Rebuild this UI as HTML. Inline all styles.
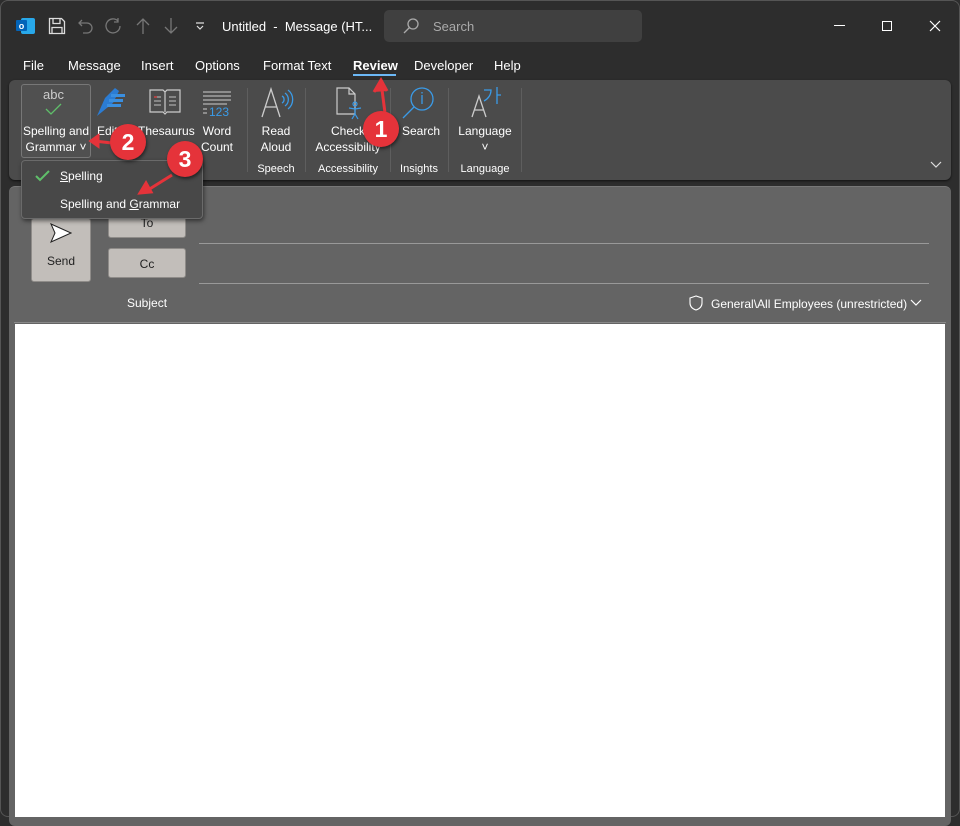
<!DOCTYPE html>
<html><head><style>
*{margin:0;padding:0;box-sizing:border-box}
body{width:960px;height:817px;background:#2d2d2d;font-family:"Liberation Sans",sans-serif;color:#fff;position:relative;overflow:hidden;font-size:12px}
.a{position:absolute;white-space:nowrap}
.t{font-size:12px;color:#fff;text-align:center;line-height:16px}
.sep{position:absolute;width:1px;background:#5e5e5e;top:88px;height:84px}
.gl{position:absolute;top:163px;font-size:11px;color:#fff;text-align:center}
.btn{position:absolute;background:#c2beba;border:1px solid #8f8c89;border-radius:3px;color:#222;font-size:12px;text-align:center}
.badge{position:absolute;width:36px;height:36px;border-radius:50%;background:#e5333a;color:#fff;font-weight:bold;font-size:23px;text-align:center;line-height:36px;box-shadow:1px 2px 3px rgba(0,0,0,.5)}
</style></head><body>
<div class="a" style="left:0;top:0;width:960px;height:817px;border:1px solid #555;border-radius:8px;pointer-events:none"></div>
<svg class="a" style="left:16px;top:17px" width="20" height="18"><rect x="5" y="1" width="14" height="16" rx="2" fill="#28a8ea"/><rect x="0" y="3" width="11" height="11" rx="1" fill="#0364b8"/><text x="5.5" y="12" font-size="9" fill="#fff" text-anchor="middle" font-family="Liberation Sans" font-weight="bold">o</text></svg>
<svg class="a" style="left:48px;top:17px" width="18" height="18" fill="none" stroke="#ddd" stroke-width="1.3"><path d="M1.5 1.5h12l3 3v12h-15z M5 1.5v5h7v-5 M4 16.5v-6h10v6"/></svg>
<svg class="a" style="left:77px;top:17px" width="18" height="18" fill="none" stroke="#777" stroke-width="1.3"><path d="M5 3 2 6l3 3 M2 6h8a5 5 0 0 1 0 10H6"/></svg>
<svg class="a" style="left:104px;top:17px" width="18" height="18" fill="none" stroke="#777" stroke-width="1.3"><path d="M14 4a7 7 0 1 0 2 5 M14 1v4h-4"/></svg>
<svg class="a" style="left:135px;top:17px" width="16" height="18" fill="none" stroke="#777" stroke-width="1.3"><path d="M8 17V2 M2 8l6-6 6 6"/></svg>
<svg class="a" style="left:163px;top:17px" width="16" height="18" fill="none" stroke="#777" stroke-width="1.3"><path d="M8 1v15 M2 10l6 6 6-6"/></svg>
<svg class="a" style="left:194px;top:20px" width="12" height="12" fill="none" stroke="#ddd" stroke-width="1.2"><path d="M2 3h8 M3 6l3 3 3-3"/></svg>
<div class="a" style="left:222px;top:19px;font-size:13px">Untitled&nbsp; - &nbsp;Message (HT...</div>
<div class="a" style="left:384px;top:10px;width:258px;height:32px;background:#404040;border-radius:5px"></div>
<svg class="a" style="left:402px;top:17px" width="18" height="18" fill="none" stroke="#aaa" stroke-width="1.3"><circle cx="11" cy="7" r="5"/><path d="M7.5 10.5 2 16"/></svg>
<div class="a" style="left:433px;top:19px;font-size:13px;color:#aaa">Search</div>
<div class="a" style="left:834px;top:25px;width:11px;height:1px;background:#fff"></div>
<div class="a" style="left:882px;top:21px;width:10px;height:10px;border:1px solid #fff"></div>
<svg class="a" style="left:929px;top:20px" width="12" height="12" stroke="#fff" stroke-width="1.2"><path d="M1 1l10 10M11 1 1 11"/></svg>
<div class="a" style="top:58px;font-size:13px;left:23px">File</div>
<div class="a" style="top:58px;font-size:13px;left:68px">Message</div>
<div class="a" style="top:58px;font-size:13px;left:141px">Insert</div>
<div class="a" style="top:58px;font-size:13px;left:195px">Options</div>
<div class="a" style="top:58px;font-size:13px;left:263px">Format Text</div>
<div class="a" style="top:58px;font-size:13px;left:353px;font-weight:bold">Review</div>
<div class="a" style="left:353px;top:74px;width:43px;height:2px;background:#6cb8f6"></div>
<div class="a" style="top:58px;font-size:13px;left:414px">Developer</div>
<div class="a" style="top:58px;font-size:13px;left:494px">Help</div>
<div class="a" style="left:9px;top:80px;width:942px;height:100px;background:#4b4b4b;border-radius:6px;box-shadow:0 1px 2px #111"></div>
<div class="a" style="left:21px;top:84px;width:70px;height:74px;border:1px solid #777;border-radius:3px;background:#505050"></div>
<div class="a" style="left:43px;top:87px;font-size:13px;color:#ccc">abc</div>
<svg class="a" style="left:44px;top:103px" width="24" height="14" fill="none" stroke="#5fbf6a" stroke-width="1.3"><path d="M2 6l5 5 10-10"/></svg>
<div class="a t" style="left:21px;top:123px;width:70px">Spelling and<br>Grammar ˅</div>
<svg class="a" style="left:95px;top:86px" width="34" height="32"><path d="M2 30 10 12 20 2l4 3-6 12z" fill="#2b7cd3"/><rect x="16" y="8" width="14" height="3" fill="#3a8fe0"/><rect x="14" y="13" width="14" height="3" fill="#3a8fe0"/><rect x="12" y="18" width="14" height="3" fill="#3a8fe0"/></svg>
<div class="a t" style="left:97px;top:123px">Edit</div>
<svg class="a" style="left:148px;top:88px" width="34" height="28" fill="none" stroke="#ccc" stroke-width="1.2"><path d="M2 2h13l2 2 2-2h13v22H19l-2 2-2-2H2z M17 4v20"/><path d="M6 9h7M6 13h7M6 17h7M21 9h7M21 13h7M21 17h7" stroke="#aaa"/><path d="M6 9h3" stroke="#d33"/></svg>
<div class="a t" style="left:138px;top:123px">Thesaurus</div>
<svg class="a" style="left:202px;top:90px" width="32" height="28"><path d="M1 2h28M1 6h28M1 10h28M1 14h24" stroke="#ccc" stroke-width="1"/><path d="M1 19h4M1 23h4" stroke="#ccc"/><text x="7" y="26" font-size="12" fill="#3a9be8" font-family="Liberation Sans">123</text></svg>
<div class="a t" style="left:196px;top:123px;width:42px">Word<br>Count</div>
<div class="sep" style="left:247px"></div>
<svg class="a" style="left:260px;top:86px" width="34" height="32" fill="none" stroke="#ccc" stroke-width="1.3"><path d="M2 31 11 3l9 28 M5 21h12"/><path d="M22 10a4 4 0 0 1 0 7 M25 7a8 8 0 0 1 0 13 M28 4a12 12 0 0 1 0 19" stroke="#3a9be8"/></svg>
<div class="a t" style="left:255px;top:123px;width:42px">Read<br>Aloud</div>
<div class="gl" style="left:255px;width:42px">Speech</div>
<div class="sep" style="left:305px"></div>
<svg class="a" style="left:335px;top:87px" width="34" height="34" fill="none" stroke="#ccc" stroke-width="1.2"><path d="M2 1h12l6 6v20H2z M14 1v6h6"/><g stroke="#3a9be8"><circle cx="20" cy="17" r="2"/><path d="M14 21l6 1 6-1 M20 22v5l-3 5 M20 27l3 5"/></g></svg>
<div class="a t" style="left:314px;top:123px;width:68px">Check<br>Accessibility</div>
<div class="gl" style="left:314px;width:68px">Accessibility</div>
<div class="sep" style="left:390px"></div>
<svg class="a" style="left:400px;top:86px" width="36" height="34" fill="none" stroke="#3a9be8" stroke-width="1.3"><circle cx="22" cy="13" r="11"/><path d="M22 9v9 M22 6v1.5 M14 21 3 32"/></svg>
<div class="a t" style="left:402px;top:123px">Search</div>
<div class="gl" style="left:398px;width:42px">Insights</div>
<div class="sep" style="left:448px"></div>
<svg class="a" style="left:470px;top:86px" width="32" height="34" fill="none" stroke="#ccc" stroke-width="1.3"><path d="M2 31 9 10l7 21 M4.5 24h9"/><path d="M14 4h7c0 5-3 9-7 11 M27 1v17 M27 9h4" stroke="#3a9be8"/></svg>
<div class="a t" style="left:455px;top:123px;width:60px">Language<br>˅</div>
<div class="gl" style="left:455px;width:60px">Language</div>
<div class="sep" style="left:521px"></div>
<svg class="a" style="left:930px;top:161px" width="12" height="8" fill="none" stroke="#ddd" stroke-width="1.2"><path d="M1 1l5 5 5-5"/></svg>
<div class="a" style="left:9px;top:186px;width:942px;height:640px;background:#646464;border-radius:6px;border-top:1px solid #777"></div>
<div class="btn" style="left:31px;top:218px;width:60px;height:64px"></div>
<svg class="a" style="left:50px;top:223px" width="22" height="20" fill="#fff" stroke="#222" stroke-width="1"><path d="M1 1l20 9-20 9 4-9z"/></svg>
<div class="a" style="left:31px;top:254px;width:60px;text-align:center;color:#222">Send</div>
<div class="btn" style="left:108px;top:206px;width:78px;height:32px;line-height:32px">To</div>
<div class="btn" style="left:108px;top:248px;width:78px;height:30px;line-height:30px">Cc</div>
<div class="a" style="left:199px;top:243px;width:730px;height:1px;background:#999"></div>
<div class="a" style="left:199px;top:283px;width:730px;height:1px;background:#999"></div>
<div class="a" style="left:127px;top:296px">Subject</div>
<svg class="a" style="left:689px;top:295px" width="14" height="16" fill="none" stroke="#fff" stroke-width="1.1"><path d="M7 1 1 3v5c0 4 3 6 6 7 3-1 6-3 6-7V3z"/></svg>
<div class="a" style="left:711px;top:297px">General\All Employees (unrestricted)</div>
<svg class="a" style="left:910px;top:299px" width="12" height="8" fill="none" stroke="#fff" stroke-width="1.2"><path d="M1 1l5 5 5-5"/></svg>
<div class="a" style="left:14px;top:322px;width:932px;height:1px;background:#888"></div>
<div class="a" style="left:15px;top:324px;width:930px;height:493px;background:#fff"></div>
<div class="a" style="left:21px;top:160px;width:182px;height:59px;background:#484848;border:1px solid #6a6a6a;border-radius:4px;box-shadow:1px 2px 4px rgba(0,0,0,.5)"></div>
<svg class="a" style="left:34px;top:169px" width="18" height="14" fill="none" stroke="#5fbf6a" stroke-width="2"><path d="M2 7l4 4 9-9"/></svg>
<div class="a" style="left:60px;top:169px"><u>S</u>pelling</div>
<div class="a" style="left:60px;top:197px">Spelling and <u>G</u>rammar</div>
<svg class="a" style="left:0;top:0" width="960" height="817" fill="none" stroke="#e5333a" stroke-width="3"><path d="M385 113 381 82"/><path d="M374 92l7-12 6 11" fill="#e5333a"/><path d="M112 143 94 141"/><path d="M98 136l-7 5 7 5z" fill="#e5333a"/><path d="M172 175 148 190"/><path d="M146 183l-6 10 11-1z" fill="#e5333a"/></svg>
<div class="badge" style="left:363px;top:111px">1</div>
<div class="badge" style="left:110px;top:124px">2</div>
<div class="badge" style="left:167px;top:141px">3</div>
</body></html>
